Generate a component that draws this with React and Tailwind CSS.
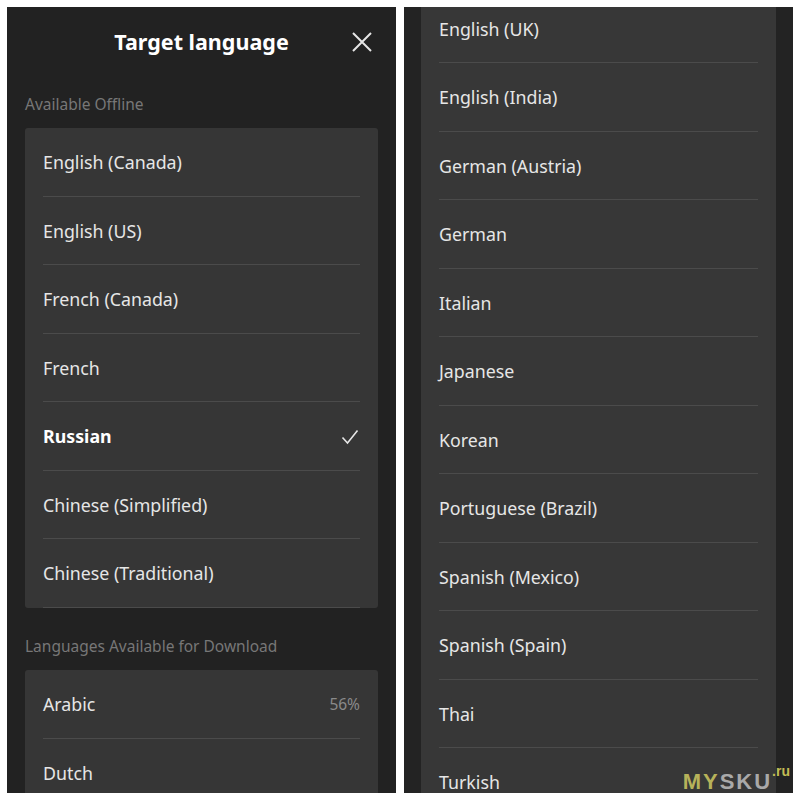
import React from "react";

const font = { fontFamily: '"Noto Sans", "Liberation Sans", sans-serif' };

function Row({ label, bold, check, right }) {
  return (
    <div className="h-[68.5px] px-[18px]">
      <div className="h-full flex items-center justify-between border-b border-[#4b4b4b] pt-[2px]">
        <span className={`text-[17.8px] ${bold ? "font-bold text-white" : "text-[#e6e6e6]"}`}>{label}</span>
        {check && (
          <svg width="18" height="16" viewBox="0 0 18 16" className="mr-[1px]">
            <path d="M1.5 8.5 L6.5 14 L16.5 1.5" fill="none" stroke="#e6e6e6" strokeWidth="1.6" />
          </svg>
        )}
        {right && <span className="text-[15.5px] text-[#8a8a8a]">{right}</span>}
      </div>
    </div>
  );
}

export default function App() {
  const offline = [
    "English (Canada)",
    "English (US)",
    "French (Canada)",
    "French",
    "Russian",
    "Chinese (Simplified)",
    "Chinese (Traditional)",
  ];
  const rightList = [
    "English (UK)",
    "English (India)",
    "German (Austria)",
    "German",
    "Italian",
    "Japanese",
    "Korean",
    "Portuguese (Brazil)",
    "Spanish (Mexico)",
    "Spanish (Spain)",
    "Thai",
    "Turkish",
  ];
  return (
    <div className="w-[800px] h-[800px] bg-white flex gap-[8px] p-[7px]" style={font}>
      {/* Left panel */}
      <div className="w-[389px] h-[786px] bg-[#222222] overflow-hidden px-[18px] flex flex-col">
        <div className="h-[70px] relative flex items-center justify-center shrink-0">
          <span className="text-[21.5px] font-bold text-white">Target language</span>
          <svg className="absolute right-[6px] top-[25px]" width="20" height="20" viewBox="0 0 20 20">
            <path d="M1 1 L19 19 M19 1 L1 19" stroke="#e6e6e6" strokeWidth="2" fill="none" />
          </svg>
        </div>
        <div className="h-[51px] flex items-center text-[15.5px] text-[#777777] shrink-0 pt-[4px]">Available Offline</div>
        <div className="bg-[#363636] rounded-[3px] shrink-0">
          {offline.map((l) => (
            <Row key={l} label={l} bold={l === "Russian"} check={l === "Russian"} />
          ))}
        </div>
        <div className="h-[62.5px] flex items-center pt-[15px] text-[15.5px] text-[#777777] shrink-0">
          Languages Available for Download
        </div>
        <div className="bg-[#363636] rounded-[3px] shrink-0">
          <Row label="Arabic" right="56%" />
          <Row label="Dutch" />
        </div>
      </div>

      {/* Right panel */}
      <div className="w-[389px] h-[786px] bg-[#232323] overflow-hidden px-[17px] relative">
        <div className="bg-[#373737] mt-[-12.5px]">
          {rightList.map((l) => (
            <Row key={l} label={l} />
          ))}
        </div>
        <div
          className="absolute right-[3px] bottom-0 flex items-start"
          style={{ fontFamily: '"Liberation Sans", "DejaVu Sans", sans-serif' }}
        >
          <span className="text-[22px] font-bold tracking-[2px] text-[#b7b25a] leading-none">MY</span>
          <span className="text-[22px] font-bold tracking-[2px] text-[#a9a9a9] leading-none">SKU</span>
          <span className="text-[14px] font-bold text-[#c2bd55] leading-none mt-[-7px]">.ru</span>
        </div>
      </div>
    </div>
  );
}
